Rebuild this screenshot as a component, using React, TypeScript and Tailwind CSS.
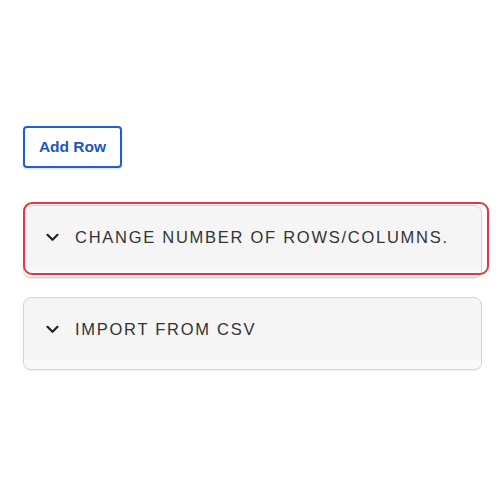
import React from "react";

function Chevron() {
  return (
    <svg width="13" height="9" viewBox="0 0 13 9" fill="none" className="shrink-0">
      <path d="M1.5 1.8 L6.5 6.8 L11.5 1.8" stroke="#222" strokeWidth="2.2" strokeLinecap="round" strokeLinejoin="round" />
    </svg>
  );
}

function Panel({ title, focused }: { title: string; focused?: boolean }) {
  return (
    <div className="relative">
      <div className="rounded-[8px] border border-[#d4d4d4] bg-[#f5f5f5] overflow-hidden shadow-[0_1px_1px_rgba(0,0,0,0.08)]">
        <div className="h-[62px] flex items-center pl-[22px] gap-[16px]">
          <Chevron />
          <span className="text-[16.5px] tracking-[0.105em] text-[#333]" style={{ fontFamily: '"Liberation Sans", Arial, sans-serif' }}>
            {title}
          </span>
        </div>
        <div className="h-[9px] bg-[#f9f9f9]" />
      </div>
      {focused && (
        <div className="absolute left-0 top-[-3px] right-[-7px] bottom-[3px] rounded-[9px] border-[2.5px] border-[#e0383e] pointer-events-none" />
      )}
    </div>
  );
}

export default function App() {
  return (
    <div className="w-[500px] h-[500px] bg-white pt-[126px] pl-[23px] pr-[18px]" style={{ fontFamily: '"Liberation Sans", Arial, sans-serif' }}>
      <button className="h-[42px] w-[99px] rounded-[4px] border-2 border-[#1c5fd6] text-[#1c55c4] font-bold text-[15.5px] bg-white shadow-[0_1px_2px_rgba(0,0,0,0.15)]">
        Add Row
      </button>
      <div className="mt-[37px] flex flex-col gap-[19px]">
        <Panel title="CHANGE NUMBER OF ROWS/COLUMNS." focused />
        <Panel title="IMPORT FROM CSV" />
      </div>
    </div>
  );
}
